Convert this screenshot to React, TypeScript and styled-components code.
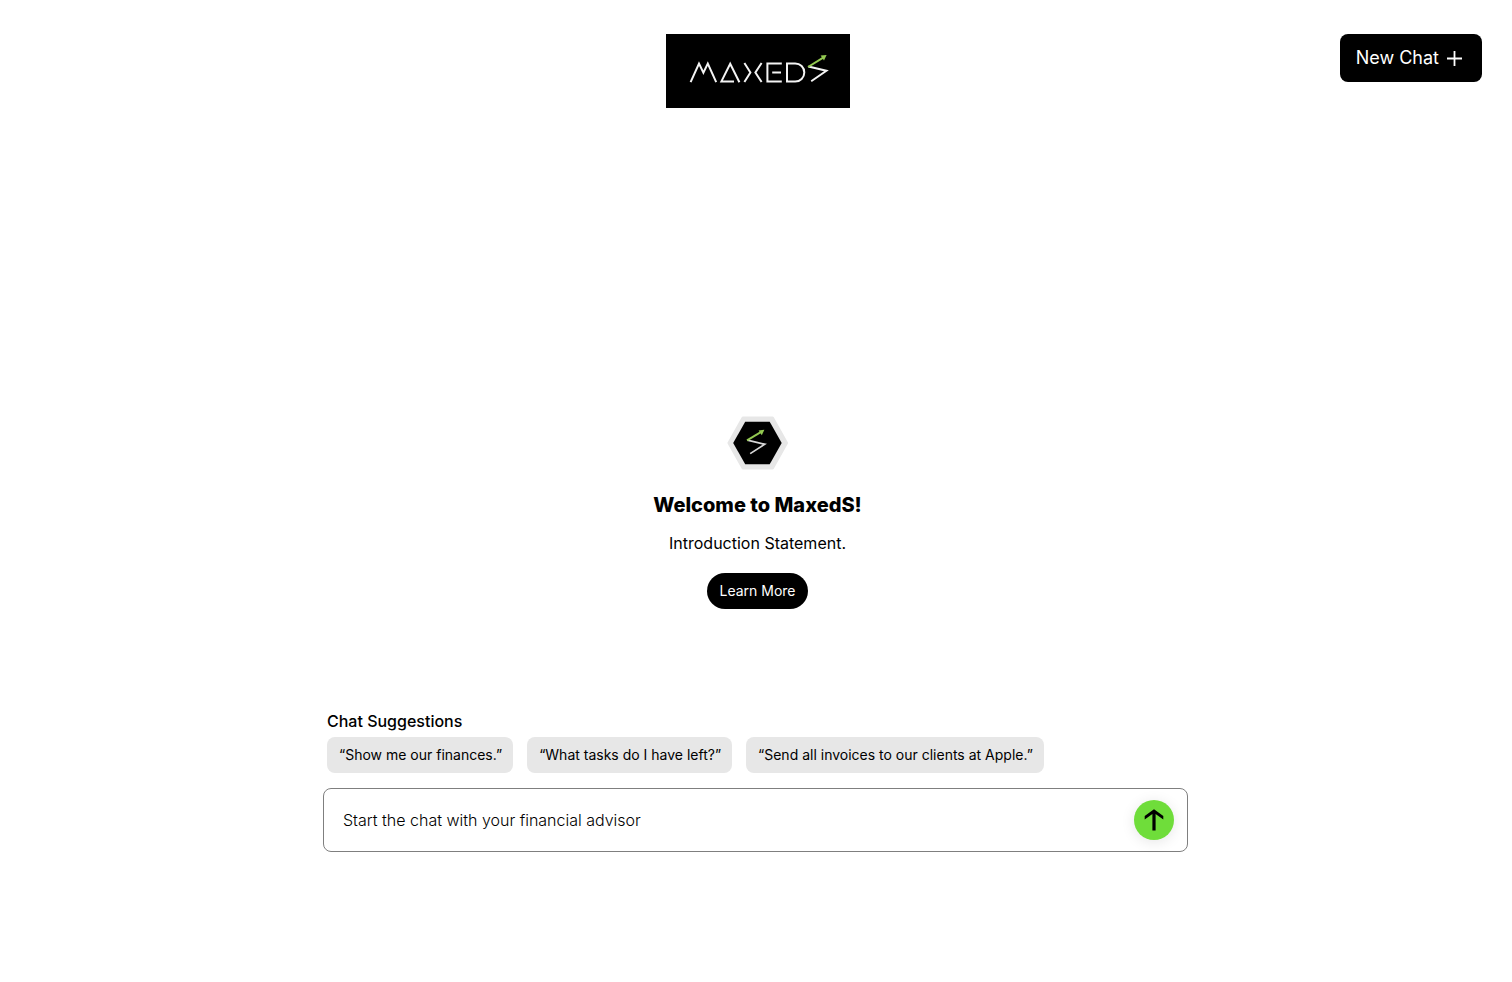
import React from "react";
import styled, { createGlobalStyle } from "styled-components";

const GlobalStyle = createGlobalStyle`
  *, *::before, *::after { box-sizing: border-box; }
  body {
    margin: 0;
    background: #fff;
    color: #000;
    font-family: Inter, "Liberation Sans", sans-serif;
  }
  button, input { font: inherit; }
  button { border: 0; cursor: pointer; }
`;

const Page = styled.div`
  display: flex;
  flex-direction: column;
  min-height: 100vh;
  padding-bottom: 130px;
`;

const Header = styled.header`
  display: grid;
  grid-template-columns: 1fr auto 1fr;
  align-items: start;
  padding: 34px 30px 0 34px;
`;

const LogoLink = styled.a`
  grid-column: 2;
  display: block;
  background: #000;

  svg { display: block; }
`;

const NewChatButton = styled.button`
  justify-self: end;
  display: flex;
  align-items: center;
  gap: 8px;
  height: 48px;
  padding: 0 20px 0 16px;
  border-radius: 8px;
  background: #000;
  color: #fff;
  font-size: 18px;
  line-height: 24px;
`;

const Main = styled.main`
  flex: 1;
  display: flex;
  flex-direction: column;
`;

const Welcome = styled.section`
  flex: 1;
  display: flex;
  flex-direction: column;
  align-items: center;
  justify-content: flex-end;
  padding: 40px 0 100px 3px;
  text-align: center;
`;

const Title = styled.h1`
  margin: 23px 0 0;
  font-size: 20px;
  line-height: 24px;
  font-weight: 800;
`;

const Intro = styled.p`
  margin: 16px 0 0;
  font-size: 16px;
  line-height: 20px;
`;

const LearnMoreButton = styled.button`
  margin-top: 20px;
  height: 36px;
  padding: 0 12px;
  border-radius: 18px;
  background: #000;
  color: #fff;
  font-size: 14px;
  line-height: 20px;
`;

const ChatPanel = styled.section`
  width: calc(100% - 32px);
  max-width: 866px;
  margin: 0 auto;
  padding-right: 1px;
`;

const Suggestions = styled.div`
  padding: 0 4px;
`;

const SuggestionsTitle = styled.h2`
  margin: 0;
  font-size: 16px;
  line-height: 24px;
  font-weight: 500;
`;

const SuggestionList = styled.div`
  display: flex;
  flex-wrap: wrap;
  gap: 14px;
  margin-top: 4px;
`;

const SuggestionChip = styled.button`
  height: 36px;
  padding: 0 11px 0 12px;
  border-radius: 8px;
  background: #e7e7e7;
  color: #000;
  font-size: 14px;
  line-height: 20px;
`;

const Composer = styled.form`
  display: flex;
  align-items: center;
  height: 64px;
  margin-top: 15px;
  padding: 0 13px 0 19px;
  border: 1px solid #7f7f7f;
  border-radius: 8px;
`;

const ChatInput = styled.input`
  flex: 1;
  min-width: 0;
  height: 40px;
  padding: 0;
  border: 0;
  outline: 0;
  background: transparent;
  color: #000;
  font-size: 16px;
  font-weight: 300;

  &::placeholder { color: #000; opacity: 1; }
`;

const SendButton = styled.button`
  width: 40px;
  height: 40px;
  padding: 0;
  border-radius: 50%;
  background: #6fdd3a;
  box-shadow: 0 2px 14px rgba(0, 0, 0, 0.1);

  svg { display: block; }
`;

const suggestions = [
  "“Show me our finances.”",
  "“What tasks do I have left?”",
  "“Send all invoices to our clients at Apple.”",
];

const Logo = () => (
  <svg width="184" height="74" viewBox="0 0 184 74" fill="none" role="img" aria-label="MaxedS">
    <g stroke="#f4f4f4" strokeWidth="2">
      <path d="M24.6 48.2 33 29.6l4.4 9 4.4-9 8.4 18.6" />
      <path d="M68 47.4H55.4L64.2 29.8l9.2 18.4" />
      <path d="M78.4 29 84.4 38.5 78.4 48" />
      <path d="M95.6 29 89.4 38.5 95.6 48" />
      <path d="M115.8 29.4H101.4V47.6h14.4M106.2 38.5H115" />
      <path d="M121 29.4h8.2a9.1 9.1 0 0 1 0 18.2H121z" />
      <path d="M142.4 32.6 160.4 36.7 145.2 47.2" />
    </g>
    <path d="M142 33 157.2 23.6" stroke="#93c951" strokeWidth="2" />
    <path d="M160.6 21.1 154.6 21.6l3.4 5z" fill="#93c951" />
  </svg>
);

const HexBadge = () => (
  <svg width="62" height="54" viewBox="0 0 62 54" fill="none" aria-hidden="true">
    <path d="M2 27 16 2H45.5L59.5 27 45.5 52H16z" fill="#e7e7e7" stroke="#e7e7e7" strokeWidth="3" strokeLinejoin="round" />
    <path d="M6.2 27 18.2 5.8H42.7L54.7 27 42.7 48.2H18.2z" fill="#000" />
    <path d="M20.4 24.2 37.8 28.2 23.2 37.6" stroke="#d8d8d8" strokeWidth="1.7" />
    <path d="M20 24.4 34.6 15.6" stroke="#93c951" strokeWidth="1.9" />
    <path d="M37.4 13.7 31.6 14.4l3.2 4.8z" fill="#93c951" />
  </svg>
);

export default function App() {
  return (
    <>
      <GlobalStyle />
      <Page>
        <Header>
          <LogoLink href="#">
            <Logo />
          </LogoLink>
          <NewChatButton type="button">
            New Chat
            <svg width="15" height="15" viewBox="0 0 15 15" aria-hidden="true">
              <path d="M7.5 0v15M0 7.5h15" stroke="#fff" strokeWidth="1.8" />
            </svg>
          </NewChatButton>
        </Header>
        <Main>
          <Welcome>
            <HexBadge />
            <Title>Welcome to MaxedS!</Title>
            <Intro>Introduction Statement.</Intro>
            <LearnMoreButton type="button">Learn More</LearnMoreButton>
          </Welcome>
          <ChatPanel>
            <Suggestions>
              <SuggestionsTitle>Chat Suggestions</SuggestionsTitle>
              <SuggestionList>
                {suggestions.map((text) => (
                  <SuggestionChip type="button" key={text}>{text}</SuggestionChip>
                ))}
              </SuggestionList>
            </Suggestions>
            <Composer onSubmit={(event) => event.preventDefault()}>
              <ChatInput
                type="text"
                aria-label="Message"
                placeholder="Start the chat with your financial advisor"
              />
              <SendButton type="submit" aria-label="Send">
                <svg width="40" height="40" viewBox="0 0 40 40" aria-hidden="true">
                  <path d="M10.7 19.4V16L20 9.3 29.3 16v3.4l-7.7-5.4v16.4h-3.2V14z" fill="#000" />
                </svg>
              </SendButton>
            </Composer>
          </ChatPanel>
        </Main>
      </Page>
    </>
  );
}
